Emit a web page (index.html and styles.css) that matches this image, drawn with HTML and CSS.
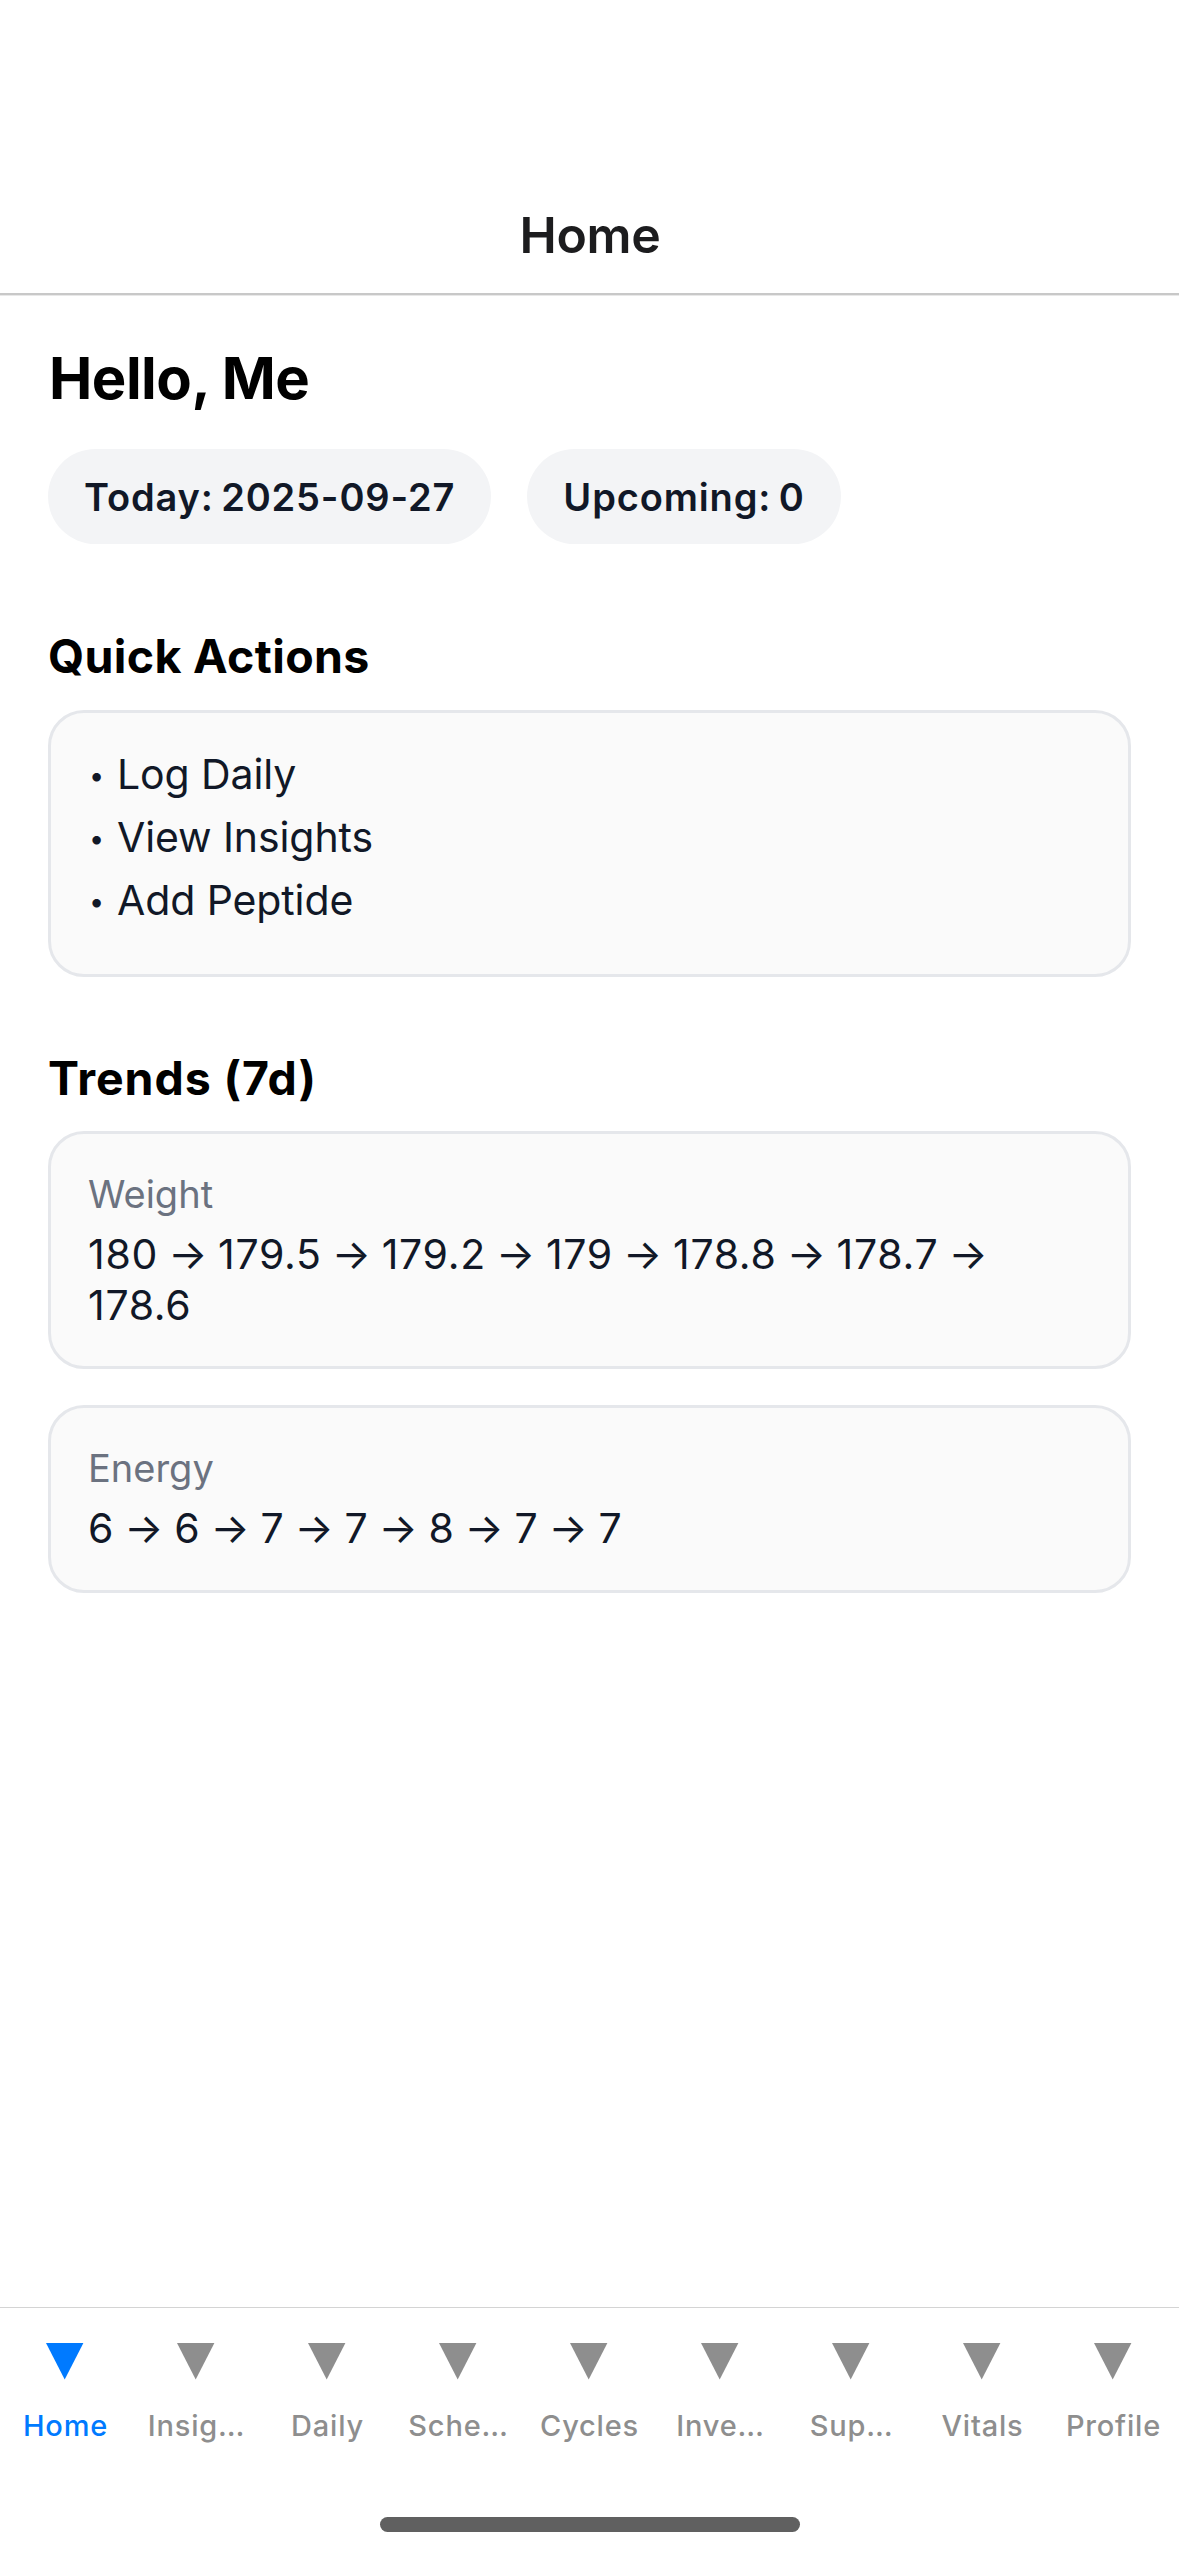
FILE: index.html
```
<!DOCTYPE html>
<html lang="en">
<head>
<meta charset="utf-8">
<title>Home</title>
<link rel="stylesheet" href="styles.css">
</head>
<body>
<div class="screen">
  <header class="header"><h1 class="header-title">Home</h1></header>

  <main class="content">
    <h2 class="greeting">Hello, Me</h2>
    <div class="chips">
      <span class="chip">Today: 2025-09-27</span>
      <span class="chip">Upcoming: 0</span>
    </div>

    <section class="section section-actions">
      <h3 class="section-title">Quick Actions</h3>
      <ul class="card actions">
        <li><span class="bullet">•</span>Log Daily</li>
        <li><span class="bullet">•</span>View Insights</li>
        <li><span class="bullet">•</span>Add Peptide</li>
      </ul>
    </section>

    <section class="section section-trends">
      <h3 class="section-title">Trends (7d)</h3>
      <div class="trends">
        <div class="card trend">
          <p class="trend-label">Weight</p>
          <p class="trend-values">180 → 179.5 → 179.2 → 179 → 178.8 → 178.7 → 178.6</p>
        </div>
        <div class="card trend">
          <p class="trend-label">Energy</p>
          <p class="trend-values">6 → 6 → 7 → 7 → 8 → 7 → 7</p>
        </div>
      </div>
    </section>
  </main>

  <nav class="tabbar">
    <div class="tabs">
      <a class="tab active"><svg class="tab-icon" viewBox="0 0 40 37"><path d="M0 0H37.4L18.7 36.5Z"/></svg><span>Home</span></a>
      <a class="tab"><svg class="tab-icon" viewBox="0 0 40 37"><path d="M0 0H37.4L18.7 36.5Z"/></svg><span>Insig…</span></a>
      <a class="tab"><svg class="tab-icon" viewBox="0 0 40 37"><path d="M0 0H37.4L18.7 36.5Z"/></svg><span>Daily</span></a>
      <a class="tab"><svg class="tab-icon" viewBox="0 0 40 37"><path d="M0 0H37.4L18.7 36.5Z"/></svg><span>Sche…</span></a>
      <a class="tab"><svg class="tab-icon" viewBox="0 0 40 37"><path d="M0 0H37.4L18.7 36.5Z"/></svg><span>Cycles</span></a>
      <a class="tab"><svg class="tab-icon" viewBox="0 0 40 37"><path d="M0 0H37.4L18.7 36.5Z"/></svg><span>Inve…</span></a>
      <a class="tab"><svg class="tab-icon" viewBox="0 0 40 37"><path d="M0 0H37.4L18.7 36.5Z"/></svg><span>Sup…</span></a>
      <a class="tab"><svg class="tab-icon" viewBox="0 0 40 37"><path d="M0 0H37.4L18.7 36.5Z"/></svg><span>Vitals</span></a>
      <a class="tab"><svg class="tab-icon" viewBox="0 0 40 37"><path d="M0 0H37.4L18.7 36.5Z"/></svg><span>Profile</span></a>
    </div>
    <div class="home-indicator"></div>
  </nav>
</div>
</body>
</html>
```
FILE: styles.css
```
* { box-sizing: border-box; }

body, h1, h2, h3, p, ul { margin: 0; padding: 0; }

body {
  font-family: Inter, "Liberation Sans", sans-serif;
  color: #111827;
  background: #fff;
}

.screen {
  display: flex;
  flex-direction: column;
  height: 2556px;
}

.header {
  display: flex;
  align-items: center;
  justify-content: center;
  height: 295px;
  padding-top: 176px;
  border-bottom: 2px solid #c8c8c8;
  box-shadow: 0 1px 0 #e8e8e8;
}

.header-title {
  padding-left: 1px;
  font-size: 50px;
  line-height: 60px;
  font-weight: 600;
  letter-spacing: -0.3px;
  color: #1c1c1e;
}

.content {
  flex: 1;
  padding: 47px 48px 0;
}

.greeting {
  padding-left: 1px;
  font-size: 58px;
  line-height: 72px;
  font-weight: 700;
  letter-spacing: -0.5px;
  color: #000;
}

.chips {
  display: flex;
  gap: 36px;
  margin-top: 35px;
}

.chip {
  height: 95px;
  padding: 0 36px;
  border-radius: 48px;
  background: #f3f4f6;
  font-size: 38px;
  line-height: 96px;
  font-weight: 600;
  letter-spacing: 0.85px;
  word-spacing: -3px;
  white-space: nowrap;
}

.section-actions { margin-top: 83px; }
.section-trends { margin-top: 72px; }

.section-title {
  margin-bottom: 24px;
  font-size: 46.5px;
  line-height: 58px;
  font-weight: 700;
  letter-spacing: 0.9px;
  color: #000;
}

.section-actions .section-title {
  margin-bottom: 25px;
  letter-spacing: 0.35px;
}

.card {
  border: 3px solid #e5e7eb;
  border-radius: 36px;
  background: #fafafa;
}

.actions {
  padding: 30px 36px 42px;
  list-style: none;
  font-size: 41px;
  line-height: 63px;
  letter-spacing: -0.1px;
}

.bullet {
  display: inline-block;
  width: 30px;
  padding-left: 2px;
  font-size: 27px;
  line-height: 1;
  vertical-align: 4px;
}

.trends {
  display: flex;
  flex-direction: column;
  gap: 36px;
}

.trend { padding: 37px 35px 35px 37px; }
.trend:last-child { padding-bottom: 36px; }

.trend-label {
  font-size: 38px;
  line-height: 46px;
  color: #6b7280;
}

.trend-values {
  margin-top: 12px;
  font-size: 41px;
  line-height: 51px;
  letter-spacing: 0.7px;
  word-spacing: -2.1px;
}

.tabbar {
  height: 249px;
  border-top: 1px solid #d4d4d4;
}

.tabs {
  display: flex;
  height: 209px;
  padding-top: 35px;
}

.tab {
  flex: 1;
  display: flex;
  flex-direction: column;
  align-items: center;
  gap: 28px;
  color: #8e8e8e;
  font-size: 29px;
  line-height: 36px;
  font-weight: 500;
  letter-spacing: 0.8px;
}

.tab.active { color: #007aff; }

.tab-icon {
  width: 40px;
  height: 37px;
  fill: currentColor;
}

.home-indicator {
  width: 420px;
  height: 15px;
  margin: 0 auto;
  border-radius: 8px;
  background: #606060;
}
```
